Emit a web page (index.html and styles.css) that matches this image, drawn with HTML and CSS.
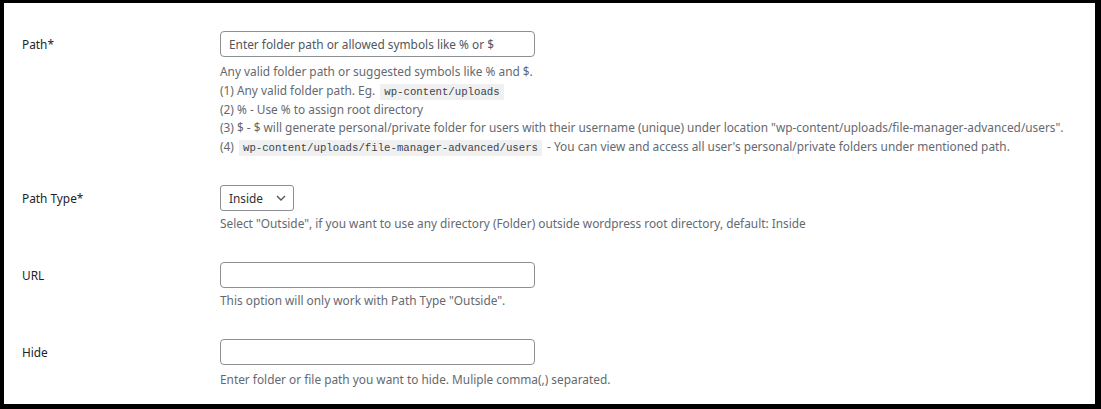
FILE: index.html
```html
<!DOCTYPE html>
<html lang="en">
<head>
<meta charset="utf-8">
<title>Settings</title>
<link rel="stylesheet" href="styles.css">
</head>
<body>
<div class="frame">
  <div class="form">
    <div class="row">
      <div class="label">Path*</div>
      <div class="field">
        <input class="text-input" type="text" placeholder="Enter folder path or allowed symbols like % or $">
        <div class="desc desc-multi">
          <div class="line">Any valid folder path or suggested symbols like % and $.</div>
          <div class="line">(1) Any valid folder path. Eg. <code>wp-content/uploads</code></div>
          <div class="line">(2) % - Use % to assign root directory</div>
          <div class="line">(3) $ - $ will generate personal/private folder for users with their username (unique) under location "wp-content/uploads/file-manager-advanced/users".</div>
          <div class="line">(4) <code>wp-content/uploads/file-manager-advanced/users</code> - You can view and access all user's personal/private folders under mentioned path.</div>
        </div>
      </div>
    </div>
    <div class="row">
      <div class="label">Path Type*</div>
      <div class="field">
        <div class="select-wrap">
          <select class="select"><option>Inside</option><option>Outside</option></select>
          <svg class="chev" width="10" height="6" viewBox="0 0 10 6"><path d="M1 1 L5 5 L9 1" fill="none" stroke="#50575e" stroke-width="1.4"/></svg>
        </div>
        <div class="desc"><div class="line">Select "Outside", if you want to use any directory (Folder) outside wordpress root directory, default: Inside</div></div>
      </div>
    </div>
    <div class="row">
      <div class="label">URL</div>
      <div class="field">
        <input class="text-input" type="text">
        <div class="desc"><div class="line">This option will only work with Path Type "Outside".</div></div>
      </div>
    </div>
    <div class="row">
      <div class="label">Hide</div>
      <div class="field">
        <input class="text-input" type="text">
        <div class="desc desc-last"><div class="line">Enter folder or file path you want to hide. Muliple comma(,) separated.</div></div>
      </div>
    </div>
  </div>
</div>
</body>
</html>
```
FILE: styles.css
```css
html, body {
  margin: 0;
  padding: 0;
  background: #000;
}
body {
  font-family: "Noto Sans", "Open Sans", sans-serif;
  font-size: 11.85px;
  color: #1d2327;
}
.frame {
  box-sizing: border-box;
  width: 1101px;
  height: 409px;
  border-style: solid;
  border-color: #000;
  border-width: 3px 6px 5px 4px;
  background: #fff;
  padding: 13px 18px 0 18px;
  overflow: hidden;
}
.row {
  display: grid;
  grid-template-columns: 198px 1fr;
  padding: 15px 0 14px;
}
.label {
  font-size: 11.85px;
  line-height: 26px;
  color: #1d2327;
}
.field {
  display: flex;
  flex-direction: column;
  align-items: flex-start;
}
.text-input {
  box-sizing: border-box;
  width: 315px;
  height: 26px;
  margin: 0;
  padding: 0 8px;
  border: 1px solid #8c8f94;
  border-radius: 4px;
  background: #fff;
  font-family: inherit;
  font-size: 11.85px;
  color: #2c3338;
  outline: none;
}
.text-input::placeholder {
  color: #50575e;
}
.select-wrap {
  position: relative;
  display: inline-block;
}
.select {
  box-sizing: border-box;
  -webkit-appearance: none;
  appearance: none;
  width: 74px;
  height: 26px;
  margin: 0;
  padding: 0 20px 0 8px;
  border: 1px solid #8c8f94;
  border-radius: 3px;
  background: #fff;
  font-family: inherit;
  font-size: 11.85px;
  color: #2c3338;
}
.chev {
  position: absolute;
  left: 56px;
  top: 10px;
  pointer-events: none;
}
.desc {
  margin-top: 3px;
  color: #646970;
  font-size: 11.85px;
  line-height: 19px;
}
.desc-multi {
  margin-top: 5px;
  line-height: 18.75px;
}
.desc-multi .line {
  height: 18.75px;
}
.desc-last {
  margin-top: 5px;
}
.line {
  white-space: nowrap;
}
code {
  font-family: "Liberation Mono", "DejaVu Sans Mono", monospace;
  font-size: 10.7px;
  line-height: 1;
  background: #f0f0f1;
  color: #3c434a;
  padding: 2px 4px;
  margin: 0 2px;
}
```
